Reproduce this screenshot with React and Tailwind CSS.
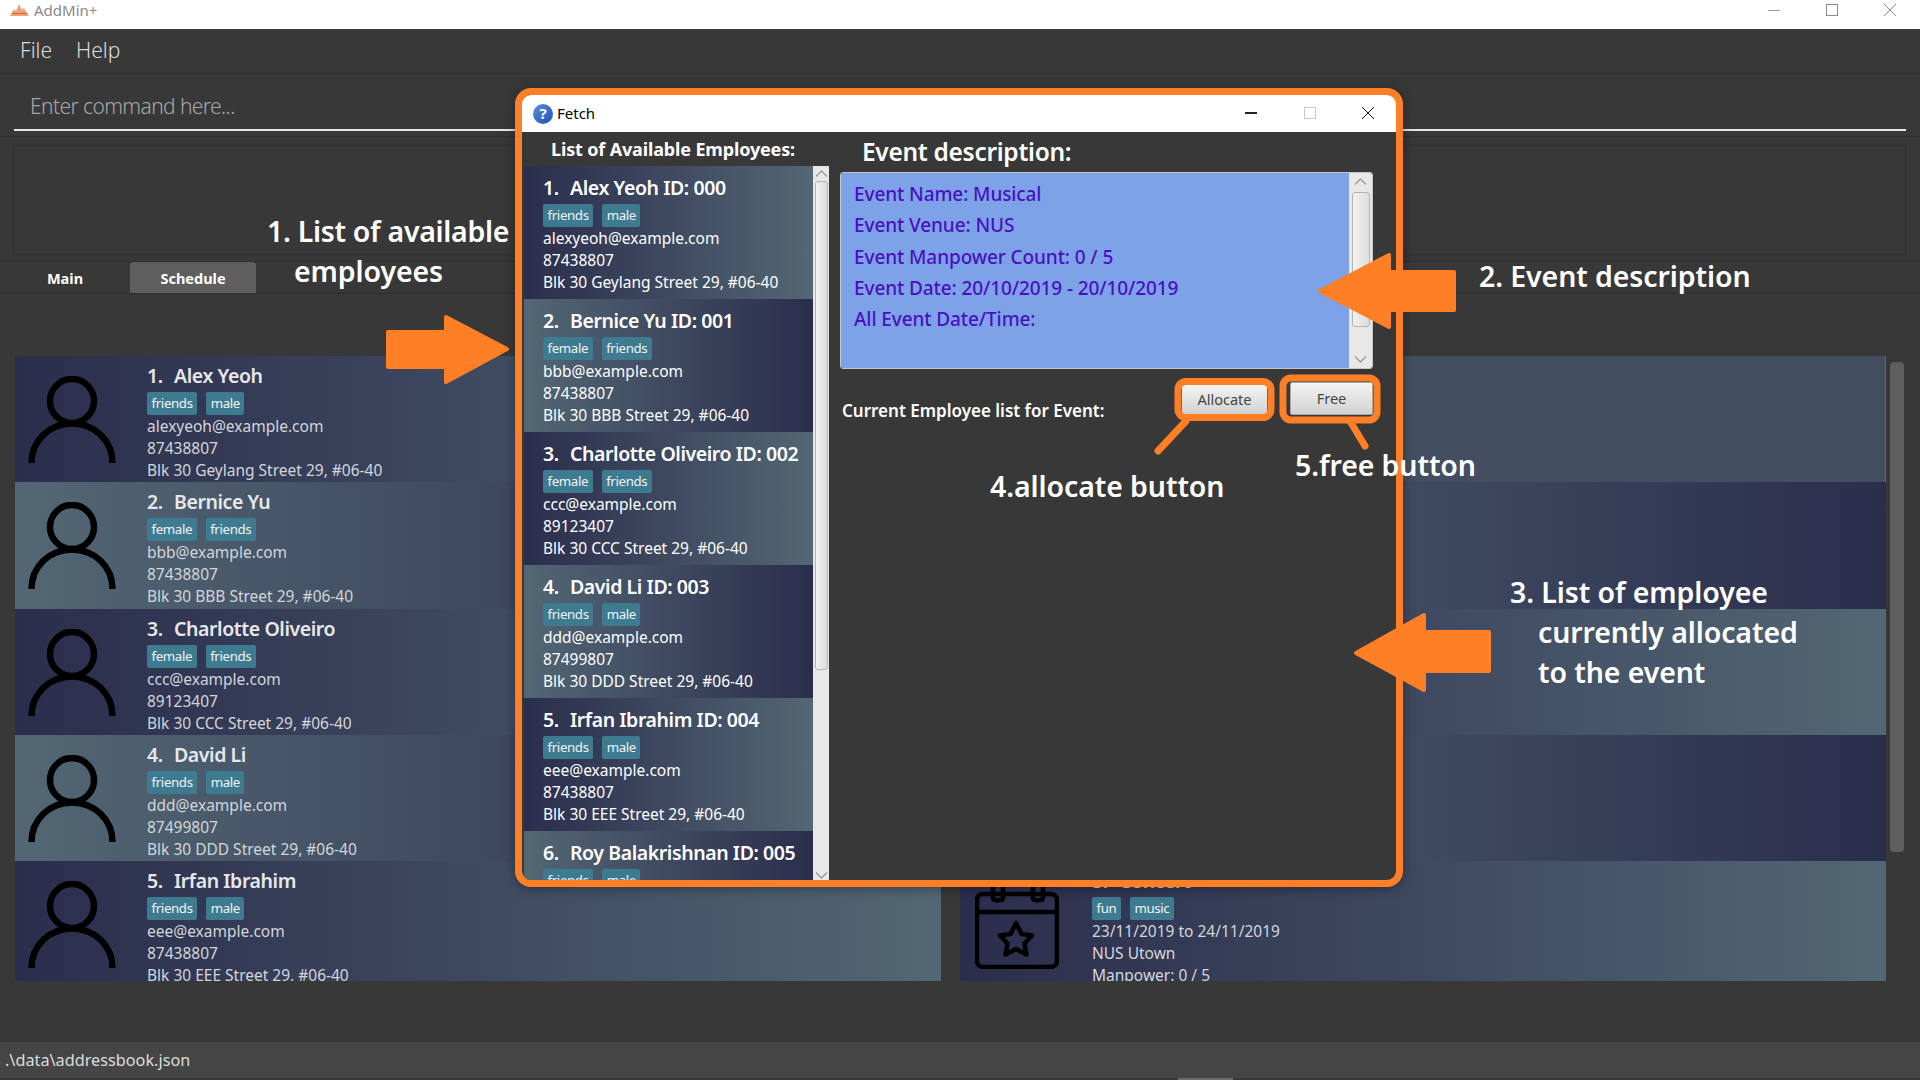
const employees = [
  { name: 'Alex Yeoh', id: '000', tags: ['friends', 'male'], email: 'alexyeoh@example.com', phone: '87438807', address: 'Blk 30 Geylang Street 29, #06-40' },
  { name: 'Bernice Yu', id: '001', tags: ['female', 'friends'], email: 'bbb@example.com', phone: '87438807', address: 'Blk 30 BBB Street 29, #06-40' },
  { name: 'Charlotte Oliveiro', id: '002', tags: ['female', 'friends'], email: 'ccc@example.com', phone: '89123407', address: 'Blk 30 CCC Street 29, #06-40' },
  { name: 'David Li', id: '003', tags: ['friends', 'male'], email: 'ddd@example.com', phone: '87499807', address: 'Blk 30 DDD Street 29, #06-40' },
  { name: 'Irfan Ibrahim', id: '004', tags: ['friends', 'male'], email: 'eee@example.com', phone: '87438807', address: 'Blk 30 EEE Street 29, #06-40' },
  { name: 'Roy Balakrishnan', id: '005', tags: ['friends', 'male'], email: 'fff@example.com', phone: '87438807', address: 'Blk 30 FFF Street 29, #06-40' },
];

const darkToLight = 'bg-gradient-to-r from-[#2b2d4c] to-[#536774]';
const lightToDark = 'bg-gradient-to-l from-[#2b2d4c] to-[#536774]';

const Tag = ({ label }) => (
  <span className="h-[23px] px-[4.5px] rounded-[2px] bg-[#3e7b91] text-[13.25px] leading-[22px] tracking-[-0.35px] text-[#f2f2f2]">{label}</span>
);

const Avatar = () => (
  <svg width="88" height="88" viewBox="0 0 88 88" fill="none" stroke="#000" strokeWidth="6.5" className="shrink-0">
    <circle cx="44" cy="25" r="22" />
    <path d="M3.5 87 C3.5 65 21 47.5 44 47.5 C67 47.5 84.5 65 84.5 87" />
  </svg>
);

const CalendarStar = () => (
  <svg width="84" height="88" viewBox="0 0 84 88" fill="none" stroke="#000" strokeWidth="4.5" strokeLinejoin="round" className="shrink-0">
    <rect x="2" y="13" width="80" height="73" rx="6" />
    <path d="M2 31 H82" />
    <path d="M18 0 V17 C18 20 28 20 28 17 V0 M58 0 V17 C58 20 68 20 68 17 V0" />
    <path d="M41 42 L46.5 53 L57 54.5 L49.5 62.5 L51.5 73.5 L41 68 L30.5 73.5 L32.5 62.5 L25 54.5 L35.5 53 Z" />
  </svg>
);

const CardTitle = ({ number, children, className }) => (
  <div className={`h-[28px] text-[19.5px] leading-[28px] font-semibold whitespace-pre tracking-[-0.42px] ${className}`}>
    <span className="inline-block w-[27px]">{number}.</span>
    {children}
  </div>
);

const PersonCard = ({ person, index, height }) => (
  <div className={`flex overflow-hidden ${height} ${index % 2 === 0 ? darkToLight : lightToDark}`}>
    <div className="w-[132px] pl-[13px] pt-[20px] shrink-0">
      <Avatar />
    </div>
    <div className="pt-[6px] text-[#d3d6da]">
      <CardTitle number={index + 1} className="text-[#e6e8ea]">{person.name}</CardTitle>
      <div className="mt-[2px] flex gap-[9px]">
        {person.tags.map((t) => <Tag key={t} label={t} />)}
      </div>
      <div className="text-[15.5px] leading-[22px]">{person.email}</div>
      <div className="text-[15.5px] leading-[22px]">{person.phone}</div>
      <div className="text-[15.5px] leading-[22px]">{person.address}</div>
    </div>
  </div>
);

const DialogCard = ({ person, index }) => (
  <div className={`h-[133px] shrink-0 overflow-hidden pl-[19px] pt-[8px] text-white ${index % 2 === 0 ? darkToLight : lightToDark}`}>
    <CardTitle number={index + 1}>{`${person.name} ID: ${person.id}`}</CardTitle>
    <div className="mt-[2px] flex gap-[9px]">
      {person.tags.map((t) => <Tag key={t} label={t} />)}
    </div>
    <div className="text-[15.5px] leading-[22px]">{person.email}</div>
    <div className="text-[15.5px] leading-[22px]">{person.phone}</div>
    <div className="text-[15.5px] leading-[22px]">{person.address}</div>
  </div>
);

const Chevron = ({ up }) => (
  <svg width="13" height="7" viewBox="0 0 13 7" fill="none" stroke="#9a9a9a" strokeWidth="1.3">
    <path d={up ? 'M1 6.5 L6.5 1 L12 6.5' : 'M1 0.5 L6.5 6 L12 0.5'} />
  </svg>
);

const Annotation = ({ className, children }) => (
  <div className={`absolute whitespace-nowrap text-white font-semibold text-[28.5px] leading-[40px] ${className}`}>{children}</div>
);

const App = () => {
  return (
    <div className="relative h-screen w-screen overflow-hidden flex flex-col bg-[#383838] font-['Noto_Sans',sans-serif]">
      {/* Main window title bar */}
      <div className="h-[29px] shrink-0 bg-white flex items-center pl-[10px] pb-[9px]">
        <svg width="19" height="12" viewBox="0 0 19 12">
          <path d="M0 12 L4 5 L6 7 L9 0 L12 6 L14 4 L19 12 Z" fill="#f2a277" />
          <path d="M2 9 H17 V10 H2 Z" fill="#c9683a" />
        </svg>
        <span className="ml-[5px] text-[15px] text-[#8a8a8a]">AddMin+</span>
        <div className="ml-auto flex items-center gap-[46px] pr-[24px]">
          <div className="w-[12px] h-px bg-[#9a9a9a]" />
          <div className="w-[12px] h-[12px] border border-[#8a8a8a]" />
          <svg width="12" height="12" viewBox="0 0 12 12" stroke="#8a8a8a" strokeWidth="1"><path d="M0 0 L12 12 M12 0 L0 12" /></svg>
        </div>
      </div>

      {/* Menu */}
      <div className="h-[44px] shrink-0 flex items-center gap-[24px] pl-[20px] text-[21px] font-light text-[#dedede]">
        <span>File</span>
        <span>Help</span>
      </div>

      {/* Command box */}
      <div className="h-[64px] shrink-0 border-y border-[#2e2e2e] pt-[13px] pl-[14px] pr-[14px]">
        <div className="h-[44px] border-b-2 border-[#e6e6e6] pl-[16px] text-[21px] leading-[38px] font-light tracking-[-0.6px] text-[#a8a8a8]">Enter command here...</div>
      </div>

      {/* Result box */}
      <div className="h-[125px] shrink-0 border-b border-[#2e2e2e] pt-[8px] pl-[13px] pr-[14px]">
        <div className="h-[110px] border border-[#2e2e2e]" />
      </div>

      {/* Tabs */}
      <div className="h-[32px] shrink-0 flex items-end border-b border-[#2e2e2e] text-[14.5px] font-bold text-white">
        <div className="w-[130px] h-[31px] pt-[2px] flex items-center justify-center">Main</div>
        <div className="w-[126px] h-[31px] pt-[2px] flex items-center justify-center rounded-t-[4px] bg-[#5e5e5e]">Schedule</div>
      </div>

      {/* Lists */}
      <div className="flex-1 min-h-0 flex pt-[62px] pl-[15px] pb-[61px]">
        <div className="w-[926px] flex flex-col">
          {employees.slice(0, 5).map((p, i) => (
            <PersonCard key={p.id} person={p} index={i} height={i === 4 ? 'flex-1' : 'h-[126.25px] shrink-0'} />
          ))}
        </div>
        <div className="ml-[19px] w-[926px] flex flex-col">
          <div className="h-[126.25px] shrink-0 bg-[#434f61] border-r border-[#3e7b91]" />
          <div className={`h-[126.25px] shrink-0 ${lightToDark}`} />
          <div className={`h-[126.25px] shrink-0 ${darkToLight}`} />
          <div className={`h-[126.25px] shrink-0 ${lightToDark}`} />
          <div className={`flex-1 flex overflow-hidden ${darkToLight}`}>
            <div className="w-[132px] pl-[15px] pt-[20px] shrink-0">
              <CalendarStar />
            </div>
            <div className="pt-[6px] text-[#d3d6da]">
              <CardTitle number={5}>Concert</CardTitle>
              <div className="mt-[2px] flex gap-[9px]">
                <Tag label="fun" />
                <Tag label="music" />
              </div>
              <div className="text-[15.5px] leading-[22px]">23/11/2019 to 24/11/2019</div>
              <div className="text-[15.5px] leading-[22px]">NUS Utown</div>
              <div className="text-[15.5px] leading-[22px]">Manpower: 0 / 5</div>
            </div>
          </div>
        </div>
        <div className="ml-[4px] mt-[6px] h-[490px] w-[14px] rounded-[4px] bg-[#5e5e5e]" />
      </div>

      {/* Status bar */}
      <div className="h-[36px] shrink-0 bg-[#454545] flex items-center pl-[5px] text-[16.25px] text-[#dcdcdc]">.\data\addressbook.json</div>
      <div className="h-[2px] shrink-0 flex">
        <div className="ml-[1178px] w-[55px] bg-[#6a6a6a]" />
      </div>

      {/* Fetch dialog */}
      <div className="absolute left-[515px] top-[88px] w-[888px] h-[799px] rounded-[16px] border-[7px] border-[#ff7f27] bg-[#383838] overflow-hidden flex flex-col shadow-[0_2px_12px_rgba(0,0,0,0.35)]">
        <div className="h-[37px] shrink-0 bg-white flex items-center pl-[11px]">
          <div className="w-[20px] h-[20px] rounded-full bg-gradient-to-br from-[#5b8fe0] to-[#1c52b0] flex items-center justify-center text-white text-[15px] font-bold leading-none">?</div>
          <span className="ml-[4px] text-[15px] text-black">Fetch</span>
          <div className="ml-auto mb-[2px] flex items-center gap-[46.5px] pr-[22px]">
            <div className="w-[12px] h-[2px] bg-[#222]" />
            <div className="w-[12px] h-[12px] border border-[#c8c8c8]" />
            <svg width="12" height="12" viewBox="0 0 12 12" stroke="#111" strokeWidth="1"><path d="M0 0 L12 12 M12 0 L0 12" /></svg>
          </div>
        </div>

        <div className="flex-1 min-h-0 flex">
          {/* Available employees */}
          <div className="w-[307px] shrink-0 flex flex-col pl-[2px]">
            <div className="h-[34px] shrink-0 pl-[27px] text-[18px] leading-[34px] font-bold text-white tracking-[-0.15px]">List of Available Employees:</div>
            <div className="flex-1 min-h-0 flex">
              <div className="w-[289px] overflow-hidden flex flex-col">
                {employees.map((p, i) => <DialogCard key={p.id} person={p} index={i} />)}
              </div>
              <div className="w-[16px] bg-[#e8e8e8] flex flex-col items-center">
                <div className="h-[15px] shrink-0 flex items-center"><Chevron up /></div>
                <div className="w-[13px] h-[489px] shrink-0 rounded-[3px] border border-[#b4b4b4] bg-gradient-to-r from-[#f2f2f2] to-[#dcdcdc]" />
                <div className="mt-auto h-[10px] flex items-center"><Chevron /></div>
              </div>
            </div>
          </div>

          {/* Event */}
          <div className="w-[544px] pl-[11px]">
            <div className="h-[40px] pl-[22px] text-[24.5px] leading-[40px] font-semibold text-white tracking-[-0.3px]">Event description:</div>
            <div className="w-[533px] h-[197px] flex rounded-[3px] border border-[#c6c6c6] overflow-hidden">
              <div className="flex-1 bg-[#7da2e8] pl-[13px] pt-[6px] text-[19px] leading-[31.25px] tracking-[-0.1px] text-[#4a10c0] font-medium">
                <div>Event Name: Musical</div>
                <div>Event Venue: NUS</div>
                <div>Event Manpower Count: 0 / 5</div>
                <div>Event Date: 20/10/2019 - 20/10/2019</div>
                <div>All Event Date/Time:</div>
              </div>
              <div className="w-[23px] bg-[#e8e8e8] flex flex-col items-center">
                <div className="h-[16px] shrink-0 flex items-center"><Chevron up /></div>
                <div className="mt-[3px] w-[18px] h-[135px] shrink-0 rounded-[3px] border border-[#b4b4b4] bg-gradient-to-r from-[#f2f2f2] to-[#dcdcdc]" />
                <div className="mt-auto h-[18px] shrink-0 flex items-center"><Chevron /></div>
              </div>
            </div>
            <div className="flex items-start w-[533px]">
              <div className="ml-[2px] mt-[31px] text-[17px] leading-[22px] font-semibold text-white">Current Employee list for Event:</div>
              <button className="ml-auto mt-[16px] w-[85px] h-[29px] rounded-[2px] bg-gradient-to-b from-[#f4f4f4] to-[#d2d2d2] text-[14.5px] text-[#444]">Allocate</button>
              <button className="ml-[23px] mt-[13px] w-[83px] h-[33px] rounded-[2px] border border-[#a8a8a8] bg-gradient-to-b from-[#f4f4f4] to-[#d2d2d2] text-[14.5px] text-[#444]">Free</button>
            </div>
          </div>
        </div>
      </div>

      {/* Hand drawn annotations */}
      <svg className="absolute left-0 top-0 pointer-events-none" width="1920" height="1080" viewBox="0 0 1920 1080" fill="#ff7f27" stroke="#ff7f27" strokeLinejoin="round" strokeLinecap="round">
        <path strokeWidth="4" d="M388 332 H446 V317 L507 349 L446 382 V367 H388 Z" />
        <path strokeWidth="4" d="M1320 291 L1389 255 V272 H1454 V310 H1389 V327 Z" />
        <path strokeWidth="4" d="M1356 653 L1424 615 V632 H1489 V671 H1424 V690 Z" />
        <rect x="1178" y="381.5" width="93" height="36" rx="8" fill="none" strokeWidth="7" />
        <rect x="1283" y="378" width="94" height="42" rx="8" fill="none" strokeWidth="7" />
        <path strokeWidth="7" fill="none" d="M1186 421 L1158 451" />
        <path strokeWidth="7" fill="none" d="M1350 421 L1365 446" />
      </svg>
      <Annotation className="left-[267px] top-[211px] tracking-[-0.3px]">1. List of available</Annotation>
      <Annotation className="left-[294px] top-[251px] tracking-[-0.1px]">employees</Annotation>
      <Annotation className="left-[1479px] top-[256px] tracking-[-0.1px]">2. Event description</Annotation>
      <Annotation className="left-[1510px] top-[572px] tracking-[-0.1px]">3. List of employee</Annotation>
      <Annotation className="left-[1538px] top-[612px] tracking-[-0.1px]">currently allocated</Annotation>
      <Annotation className="left-[1538px] top-[652px] tracking-[-0.1px]">to the event</Annotation>
      <Annotation className="left-[990px] top-[466px] tracking-[-0.1px]">4.allocate button</Annotation>
      <Annotation className="left-[1295px] top-[445px] tracking-[-0.1px]">5.free button</Annotation>
    </div>
  );
};

export default App;
